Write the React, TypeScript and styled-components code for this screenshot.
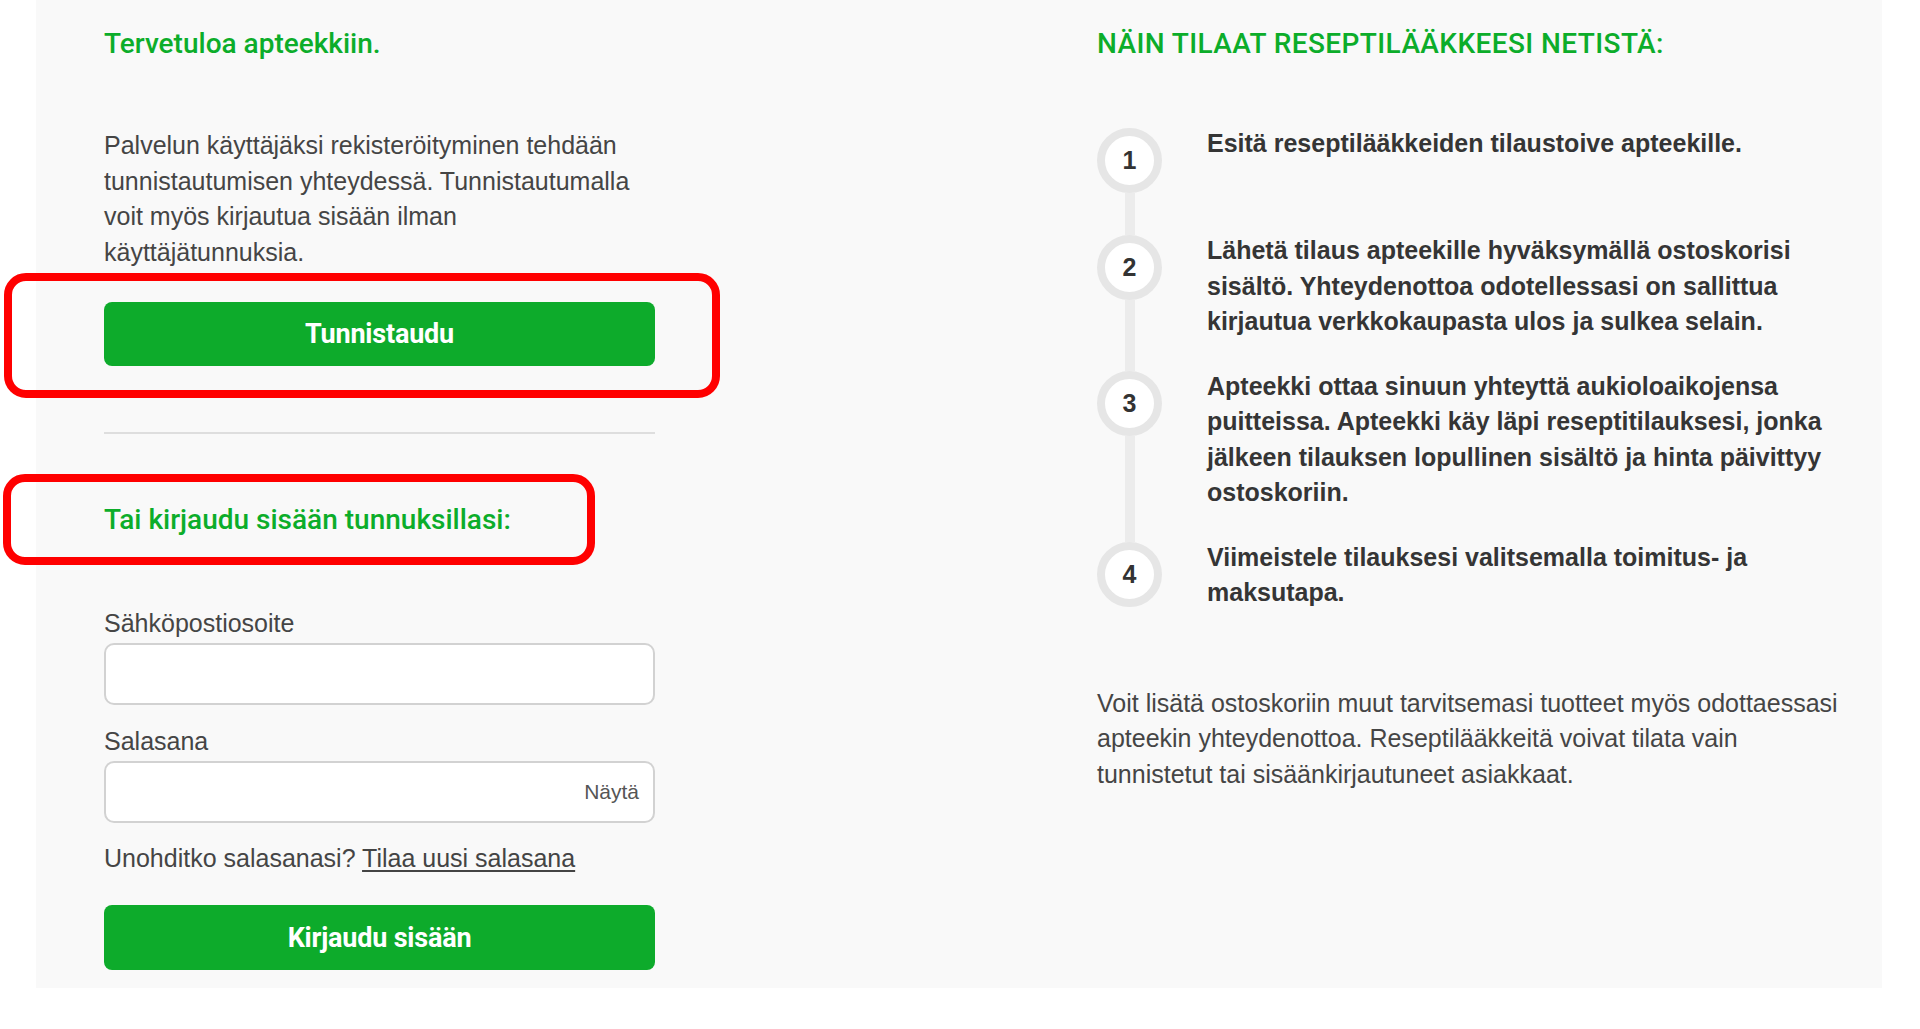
import React, { FC } from "react";
import styled, { createGlobalStyle } from "styled-components";

const GREEN = "#0dab2b";
const HEADING_GREEN = "#0cad2a";
const TEXT = "#454545";

const steps = [
  "Esitä reseptilääkkeiden tilaustoive apteekille.",
  "Lähetä tilaus apteekille hyväksymällä ostoskorisi sisältö. Yhteydenottoa odotellessasi on sallittua kirjautua verkkokaupasta ulos ja sulkea selain.",
  "Apteekki ottaa sinuun yhteyttä aukioloaikojensa puitteissa. Apteekki käy läpi reseptitilauksesi, jonka jälkeen tilauksen lopullinen sisältö ja hinta päivittyy ostoskoriin.",
  "Viimeistele tilauksesi valitsemalla toimitus- ja maksutapa.",
];

const GlobalStyle = createGlobalStyle`
  body {
    margin: 0;
    background: #fff;
    font-family: "Liberation Sans", Arial, sans-serif;
    color: ${TEXT};
  }
  * {
    box-sizing: border-box;
  }
`;

const App: FC = () => {
  return (
    <>
      <GlobalStyle />
      <StyledPanel>
        <StyledLeft>
          <StyledHeading>Tervetuloa apteekkiin.</StyledHeading>
          <StyledIntro>
            Palvelun käyttäjäksi rekisteröityminen tehdään tunnistautumisen yhteydessä. Tunnistautumalla voit
            myös kirjautua sisään ilman käyttäjätunnuksia.
          </StyledIntro>
          <StyledHighlight inset="-29px -65px -32px -100px">
            <StyledButton type="button">Tunnistaudu</StyledButton>
          </StyledHighlight>
          <StyledDivider />
          <StyledHighlight inset="-29px 60px -28px -101px">
            <StyledHeading>Tai kirjaudu sisään tunnuksillasi:</StyledHeading>
          </StyledHighlight>
          <StyledForm onSubmit={(e) => e.preventDefault()}>
            <StyledLabel htmlFor="email">Sähköpostiosoite</StyledLabel>
            <StyledField>
              <StyledInput id="email" type="email" />
            </StyledField>
            <StyledLabel htmlFor="password" spaced>
              Salasana
            </StyledLabel>
            <StyledField>
              <StyledInput id="password" type="password" />
              <StyledShow type="button">Näytä</StyledShow>
            </StyledField>
            <StyledForgot>
              Unohditko salasanasi? <a href="#">Tilaa uusi salasana</a>
            </StyledForgot>
            <StyledButton type="submit">Kirjaudu sisään</StyledButton>
          </StyledForm>
        </StyledLeft>

        <StyledRight>
          <StyledHeading wide>NÄIN TILAAT RESEPTILÄÄKKEESI NETISTÄ:</StyledHeading>
          <StyledSteps>
            {steps.map((text, i) => (
              <StyledStep key={i} last={i === steps.length - 1}>
                <StyledTrack>
                  <StyledCircle>{i + 1}</StyledCircle>
                  {i < steps.length - 1 && <StyledLine />}
                </StyledTrack>
                <StyledStepText>{text}</StyledStepText>
              </StyledStep>
            ))}
          </StyledSteps>
          <StyledNote>
            Voit lisätä ostoskoriin muut tarvitsemasi tuotteet myös odottaessasi apteekin yhteydenottoa.
            Reseptilääkkeitä voivat tilata vain tunnistetut tai sisäänkirjautuneet asiakkaat.
          </StyledNote>
        </StyledRight>
      </StyledPanel>
    </>
  );
};

const StyledPanel = styled.main`
  margin-left: 36px;
  width: 1846px;
  height: 988px;
  background: #f9f9f9;
  display: grid;
  grid-template-columns: 551px 760px;
  column-gap: 442px;
  padding: 27px 25px 0 68px;
  align-items: start;
`;

const StyledLeft = styled.section`
  display: flex;
  flex-direction: column;
`;

const StyledRight = styled.section`
  display: flex;
  flex-direction: column;
`;

const StyledHeading = styled.h2<{ wide?: boolean }>`
  margin: 0;
  font-family: Roboto, "Liberation Sans", sans-serif;
  font-weight: 500;
  font-size: 28px;
  line-height: 34px;
  letter-spacing: ${({ wide }) => (wide ? "0.4px" : "0")};
  color: ${HEADING_GREEN};
`;

const StyledIntro = styled.p`
  margin: 67px 0 32px;
  font-size: 25px;
  line-height: 35.5px;
`;

const StyledHighlight = styled.div<{ inset: string }>`
  position: relative;

  &::after {
    content: "";
    position: absolute;
    inset: ${({ inset }) => inset};
    border: 8px solid #ff0000;
    border-radius: 22px;
    pointer-events: none;
  }
`;

const StyledButton = styled.button`
  width: 100%;
  height: 64px;
  border: none;
  border-radius: 8px;
  background: ${GREEN};
  color: #fff;
  font-family: Roboto, "Liberation Sans", sans-serif;
  font-weight: 700;
  font-size: 27px;
  letter-spacing: -0.2px;
  cursor: pointer;
`;

const StyledDivider = styled.hr`
  margin: 66px 0 69px;
  border: none;
  border-top: 2px solid #dedede;
`;

const StyledForm = styled.form`
  display: flex;
  flex-direction: column;
  margin-top: 71px;

  ${StyledButton} {
    height: 65px;
    margin-top: 32px;
  }
`;

const StyledLabel = styled.label<{ spaced?: boolean }>`
  font-size: 25px;
  line-height: 30px;
  margin: ${({ spaced }) => (spaced ? "21px" : "0")} 0 5px;
`;

const StyledField = styled.div`
  display: flex;
  align-items: center;
  height: 62px;
  background: #fff;
  border: 2px solid #d2d2d2;
  border-radius: 10px;
  padding: 0 14px 0 16px;
`;

const StyledInput = styled.input`
  flex: 1;
  min-width: 0;
  height: 100%;
  border: none;
  outline: none;
  background: transparent;
  font: inherit;
  font-size: 22px;
`;

const StyledShow = styled.button`
  border: none;
  background: none;
  padding: 0;
  font-family: "Liberation Sans", Arial, sans-serif;
  font-size: 21px;
  color: #555;
  cursor: pointer;
`;

const StyledForgot = styled.p`
  margin: 20px 0 0;
  font-size: 25px;
  line-height: 30px;

  a {
    color: #444;
    text-decoration: underline;
    text-underline-offset: 3px;
  }
`;

const StyledSteps = styled.ol`
  list-style: none;
  margin: 65px 0 0;
  padding: 0;
`;

const StyledStep = styled.li<{ last: boolean }>`
  display: flex;
  gap: 45px;
  min-height: ${({ last }) => (last ? "71px" : "107px")};
  padding-bottom: ${({ last }) => (last ? "0" : "29px")};
`;

const StyledTrack = styled.div`
  flex: 0 0 65px;
  display: flex;
  flex-direction: column;
  align-items: center;
  padding-top: 2px;
  margin-bottom: -31px;
`;

const StyledCircle = styled.span`
  width: 65px;
  height: 65px;
  flex: 0 0 65px;
  border-radius: 50%;
  border: 8px solid #e6e6e6;
  background: #fff;
  display: flex;
  align-items: center;
  justify-content: center;
  font-weight: 700;
  font-size: 25px;
  color: #333;
`;

const StyledLine = styled.span`
  flex: 1;
  width: 10px;
  background: #ececec;
`;

const StyledStepText = styled.p`
  margin: 0;
  flex: 1;
  font-weight: 700;
  font-size: 25px;
  line-height: 35.5px;
  color: #353535;
`;

const StyledNote = styled.p`
  margin: 75px 0 0;
  font-size: 25px;
  line-height: 35.5px;
`;

export default App;
